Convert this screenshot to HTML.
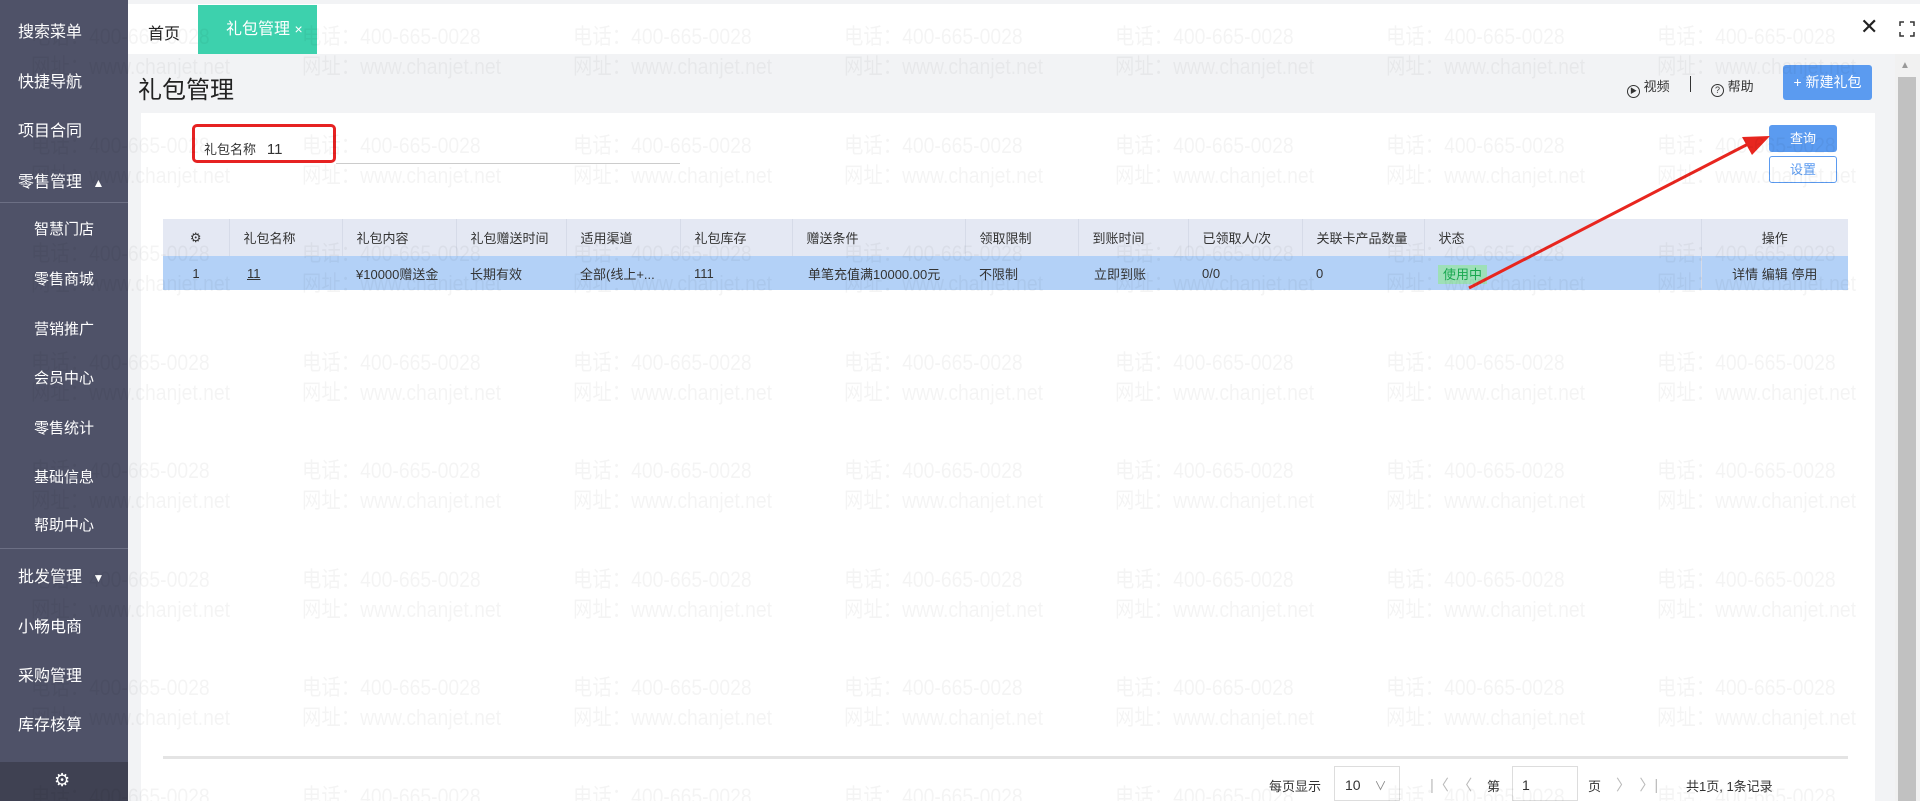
<!DOCTYPE html>
<html><head><meta charset="utf-8"><style>
*{margin:0;padding:0;box-sizing:border-box}
body{width:1920px;height:801px;overflow:hidden;position:relative;background:#f2f3f5;font-family:"Liberation Sans","Noto Sans CJK SC",sans-serif;color:#333;font-size:14px}
.sb{position:absolute;left:0;top:0;width:128px;height:801px;background:#4f5268;color:#fff}
.sb div{position:absolute;font-size:16px;white-space:nowrap}
.sb .sub{left:34px;font-size:15px}
.sb .top{left:18px}
.sbline{position:absolute;left:0;width:128px;height:1px;background:#6c6f84}
.gear{position:absolute;left:0;top:762px;width:128px;height:39px;background:#3f4152}
.topbar{position:absolute;left:128px;top:4px;width:1767px;height:50px;background:#fff}
.tab{position:absolute;top:5px;left:198px;width:119px;height:49px;background:#3dd1ad;color:#fff;font-size:16px;line-height:49px;padding-left:28px;white-space:nowrap}
.panel{position:absolute;left:141px;top:113px;width:1734px;height:688px;background:#fff}
table{position:absolute;left:163px;top:219px;width:1685px;border-collapse:collapse;table-layout:fixed;font-size:13px}
th{height:37px;background:#e4e8f3;text-align:left;font-weight:normal;padding-left:14px;border-right:1px solid #d6dbe8;color:#333}
td{height:34px;background:#b3d1f7;padding-left:14px;white-space:nowrap;overflow:hidden;color:#333}
.wm{position:absolute;left:0;top:0;width:1920px;height:801px;pointer-events:none;overflow:hidden}
.wm span{position:absolute;font-size:22px;line-height:30px;color:rgba(0,0,0,0.045);white-space:nowrap;transform:scaleX(0.88);transform-origin:0 0}
.btn{position:absolute;border-radius:3px;text-align:center;font-size:13px;white-space:nowrap}
</style></head><body>
<div class="topbar"></div>
<div style="position:absolute;left:148px;top:20px;font-size:16px;color:#222">首页</div>
<div class="tab">礼包管理 <span style="font-size:14px">×</span></div>
<div style="position:absolute;left:1860px;top:14px;font-size:22px;color:#222">✕</div>
<div style="position:absolute;left:1895px;top:4px;width:25px;height:50px;background:#fff"></div>
<svg style="position:absolute;left:1899px;top:21px" width="16" height="16" viewBox="0 0 16 16" fill="none" stroke="#333" stroke-width="1.5"><path d="M1 5V1h4M11 1h4v4M15 11v4h-4M5 15H1v-4"/></svg>
<div style="position:absolute;left:1895px;top:54px;width:25px;height:747px;background:#f1f1f1"></div>
<div style="position:absolute;left:1898px;top:77px;width:18px;height:724px;background:#c1c1c1"></div>
<div style="position:absolute;left:1900px;top:60px;font-size:10px;color:#999">▲</div>
<div style="position:absolute;left:138px;top:70px;font-size:24px;color:#222">礼包管理</div>
<div style="position:absolute;left:1627px;top:76px;font-size:13px;color:#333;white-space:nowrap"><span style="display:inline-block;width:13px;height:13px;border:1px solid #333;border-radius:50%;font-size:7px;line-height:11px;text-align:center;vertical-align:-2px">▶</span> 视频</div>
<div style="position:absolute;left:1690px;top:76px;width:1px;height:16px;background:#333"></div>
<div style="position:absolute;left:1711px;top:76px;font-size:13px;color:#333;white-space:nowrap"><span style="display:inline-block;width:13px;height:13px;border:1px solid #333;border-radius:50%;font-size:9px;line-height:11px;text-align:center;vertical-align:-2px">?</span> 帮助</div>
<div class="btn" style="left:1783px;top:65px;width:89px;height:35px;background:#5b9bf0;color:#fff;line-height:35px;font-size:14px">+ 新建礼包</div>
<div class="panel"></div>
<div style="position:absolute;left:192px;top:124px;width:144px;height:39px;border:3px solid #e62222;border-radius:5px"></div>
<div style="position:absolute;left:204px;top:139px;font-size:13px;white-space:nowrap">礼包名称 &nbsp; <span style="font-size:15px">11</span></div>
<div style="position:absolute;left:336px;top:163px;width:344px;height:1px;background:#ccc"></div>
<div class="btn" style="left:1769px;top:125px;width:68px;height:27px;background:#5b9bf0;color:#fff;line-height:27px">查询</div>
<div class="btn" style="left:1769px;top:156px;width:68px;height:27px;border:1px solid #5b9bf0;background:#fff;color:#5b9bf0;line-height:25px">设置</div>
<table>
<colgroup><col style="width:66px"><col style="width:113px"><col style="width:114px"><col style="width:110px"><col style="width:114px"><col style="width:112px"><col style="width:173px"><col style="width:113px"><col style="width:110px"><col style="width:114px"><col style="width:122px"><col style="width:277px"><col style="width:147px"></colgroup>
<tr><th style="text-align:center;padding:0">⚙</th><th>礼包名称</th><th>礼包内容</th><th>礼包赠送时间</th><th>适用渠道</th><th>礼包库存</th><th>赠送条件</th><th>领取限制</th><th>到账时间</th><th>已领取人/次</th><th>关联卡产品数量</th><th>状态</th><th style="text-align:center;padding:0;border-right:0">操作</th></tr>
<tr><td style="text-align:center;padding:0">1</td><td style="padding-left:18px"><u>11</u></td><td>¥10000赠送金</td><td>长期有效</td><td>全部(线上+...</td><td>111</td><td style="padding-left:16px">单笔充值满10000.00元</td><td>不限制</td><td style="padding-left:16px">立即到账</td><td>0/0</td><td>0</td><td><span style="background:#9ee0b8;color:#19a84f;padding:2px 5px">使用中</span></td><td style="text-align:center;padding:0;border-left:1px solid #d6dbe8">详情 编辑 停用</td></tr>
</table>
<div style="position:absolute;left:163px;top:756px;width:1685px;height:3px;background:#e4e4e4"></div>
<div style="position:absolute;left:1269px;top:776px;font-size:13px;color:#333;white-space:nowrap">每页显示</div>
<div style="position:absolute;left:1334px;top:766px;width:66px;height:35px;border:1px solid #ddd;background:#fff;font-size:14px;padding:10px 0 0 10px;white-space:nowrap">10 <span style="color:#888;margin-left:10px;font-size:12px">∨</span></div>
<div style="position:absolute;left:1430px;top:774px;font-size:15px;color:#bbb;white-space:nowrap">|〈 &nbsp;〈</div>
<div style="position:absolute;left:1487px;top:776px;font-size:13px">第</div>
<div style="position:absolute;left:1512px;top:766px;width:66px;height:35px;border:1px solid #ddd;background:#fff;font-size:14px;padding:10px 0 0 9px">1</div>
<div style="position:absolute;left:1588px;top:776px;font-size:13px">页</div>
<div style="position:absolute;left:1616px;top:774px;font-size:15px;color:#bbb;white-space:nowrap">〉 &nbsp;〉|</div>
<div style="position:absolute;left:1686px;top:776px;font-size:13px;white-space:nowrap">共1页, 1条记录</div>
<div class="sb">
<div class="top" style="top:18px">搜索菜单</div>
<div class="top" style="top:68px">快捷导航</div>
<div class="top" style="top:117px">项目合同</div>
<div class="top" style="top:168px">零售管理 <span style="font-size:12px;margin-left:6px">▲</span></div>
<div class="sbline" style="top:202px"></div>
<div class="sub" style="top:218px">智慧门店</div>
<div class="sub" style="top:268px">零售商城</div>
<div class="sub" style="top:318px">营销推广</div>
<div class="sub" style="top:367px">会员中心</div>
<div class="sub" style="top:417px">零售统计</div>
<div class="sub" style="top:466px">基础信息</div>
<div class="sub" style="top:514px">帮助中心</div>
<div class="sbline" style="top:548px"></div>
<div class="top" style="top:563px">批发管理 <span style="font-size:12px;margin-left:6px">▼</span></div>
<div class="top" style="top:613px">小畅电商</div>
<div class="top" style="top:662px">采购管理</div>
<div class="top" style="top:711px">库存核算</div>
</div>
<div class="gear"><div style="position:absolute;left:54px;top:8px;font-size:18px;color:#fff">⚙</div></div>
<svg style="position:absolute;left:0;top:0" width="1920" height="801"><line x1="1469" y1="288" x2="1752" y2="142" stroke="#e8261f" stroke-width="3"/><polygon points="1770,136 1742,137 1752,155" fill="#e8261f"/></svg>
<div class="wm"></div>
<script>
(function(){var w=document.querySelector('.wm');var h='';for(var r=0;r<8;r++){var y=22+r*108.5;for(var c=0;c<7;c++){var x=31+c*271;h+='<span style="left:'+x+'px;top:'+y+'px">电话：400-665-0028</span><span style="left:'+x+'px;top:'+(y+30)+'px">网址：www.chanjet.net</span>';}}w.innerHTML=h;})();
</script>
</body></html>
